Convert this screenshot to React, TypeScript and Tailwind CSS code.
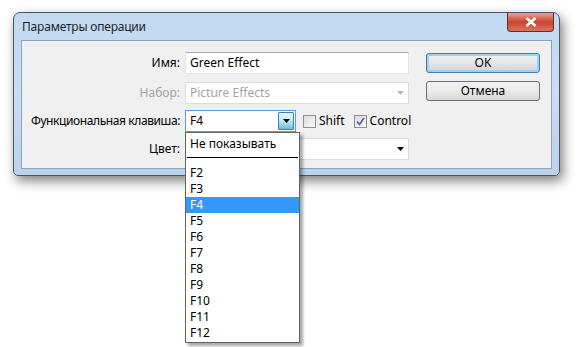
import React from 'react'

const keys = ['F2', 'F3', 'F4', 'F5', 'F6', 'F7', 'F8', 'F9', 'F10', 'F11', 'F12']

function Arrow({ color = '#000' }: { color?: string }) {
  return (
    <svg width="7" height="4" viewBox="0 0 7 4">
      <path d="M0 0h7L3.5 4z" fill={color} />
    </svg>
  )
}

function Check({ checked }: { checked?: boolean }) {
  return (
    <span className="w-[13px] h-[13px] border border-[#8f8f8f] bg-gradient-to-br from-[#dcdcdc] to-[#fbfbfb] flex items-center justify-center">
      {checked && (
        <svg width="9" height="9" viewBox="0 0 9 9">
          <path d="M1 4.5l2.5 3L8 1" stroke="#4a5aa8" strokeWidth="1.6" fill="none" />
        </svg>
      )}
    </span>
  )
}

export default function App() {
  return (
    <div
      className="w-[578px] h-[347px] bg-white relative pl-[13px] pt-[12px] text-[12px] text-black"
      style={{ fontFamily: '"Noto Sans", "Open Sans", sans-serif' }}
    >
      {/* окно */}
      <div className="w-[547px] h-[164px] rounded-t-[7px] rounded-b-[5px] border border-[#4a5666] bg-gradient-to-b from-[#c2d9f1] via-[#c9ddf3] to-[#bcd3ec] flex flex-col shadow-[3px_5px_12px_rgba(0,0,0,0.5)]">
        <div className="h-[27px] flex items-start pl-[8px] pr-[5px]">
          <div className="flex-1 pt-[5px] text-[#1e1e1e] tracking-[-0.2px]">Параметры операции</div>
          <div className="w-[47px] h-[19px] rounded-b-[4px] border border-[#6b2b24] border-t-0 bg-gradient-to-b from-[#e6a296] via-[#c9432e] to-[#d8755e] flex items-center justify-center">
            <svg width="12" height="10" viewBox="0 0 12 10">
              <path d="M1.5 1l9 8M10.5 1l-9 8" stroke="#fff" strokeWidth="2.6" />
            </svg>
          </div>
        </div>
        <div className="mx-[7px] mb-[6px] flex-1 border border-[#8ba3bd] bg-[#f0f0f0] flex">
          <div className="w-[163px] flex flex-col items-end pt-[11px] pr-[5px] whitespace-nowrap">
            <div className="h-[22px] flex items-center">Имя:</div>
            <div className="h-[22px] mt-[8px] flex items-center text-[#a3a3a3]">Набор:</div>
            <div className="h-[22px] mt-[6px] flex items-center tracking-[-0.4px]">Функциональная клавиша:</div>
            <div className="h-[22px] mt-[6px] flex items-center">Цвет:</div>
          </div>
          <div className="w-[241px] flex flex-col pt-[11px]">
            <div className="w-[224px] h-[22px] bg-white border border-[#e2e3ea] border-t-[#abadb3] flex items-center pl-[4px]">Green Effect</div>
            <div className="w-[224px] h-[22px] mt-[8px] bg-white border border-[#dcdcdc] flex items-center pl-[4px] text-[#a3a3a3]">
              <span className="flex-1">Picture Effects</span>
              <span className="pr-[4px] flex"><Arrow color="#b8b8b8" /></span>
            </div>
            <div className="h-[22px] mt-[6px] flex items-center">
              <div className="w-[111px] h-[22px] bg-white border border-[#569de5] flex items-center pl-[4px] pr-[1px]">
                <span className="flex-1">F4</span>
                <span className="w-[16px] h-[18px] border border-[#3c7fb1] rounded-[1px] bg-gradient-to-b from-[#e5f4fc] via-[#c4e5f6] to-[#6bb8e4] flex items-center justify-center">
                  <Arrow />
                </span>
              </div>
              <span className="ml-[7px] flex items-center gap-[3px]"><Check /> Shift</span>
              <span className="ml-[9px] flex items-center gap-[3px]"><Check checked /> Control</span>
            </div>
            <div className="w-[224px] h-[22px] mt-[6px] bg-white border border-[#dcdcdc] flex items-center justify-end pr-[4px]">
              <Arrow />
            </div>
          </div>
          <div className="flex flex-col pt-[12px]">
            <div className="w-[114px] h-[20px] rounded-[3px] border border-[#3c7fb1] shadow-[inset_0_0_0_2px_#9ad2f1] bg-gradient-to-b from-[#f2f2f2] via-[#e6e6e6] to-[#d4d4d4] flex items-center justify-center">
              OK
            </div>
            <div className="w-[114px] h-[20px] mt-[8px] rounded-[3px] border border-[#707070] bg-gradient-to-b from-[#f2f2f2] via-[#ebebeb] to-[#d6d6d6] flex items-center justify-center">
              Отмена
            </div>
          </div>
        </div>
      </div>

      {/* выпадающий список */}
      <div className="absolute left-[185px] top-[132px] w-[115px] bg-white border border-[#646464] shadow-[3px_3px_3px_rgba(0,0,0,0.35)] pb-[1px]">
        <div className="h-[18px] flex items-center pl-[4px] mt-[2px]">Не показывать</div>
        <div className="h-[5px] border-b border-black mx-px" />
        <div className="h-[7px]" />
        {keys.map(k => (
          <div
            key={k}
            className={k === 'F4' ? 'h-[16px] flex items-center pl-[4px] bg-[#3399ff] text-white' : 'h-[16px] flex items-center pl-[4px]'}
          >
            {k}
          </div>
        ))}
      </div>
    </div>
  )
}
